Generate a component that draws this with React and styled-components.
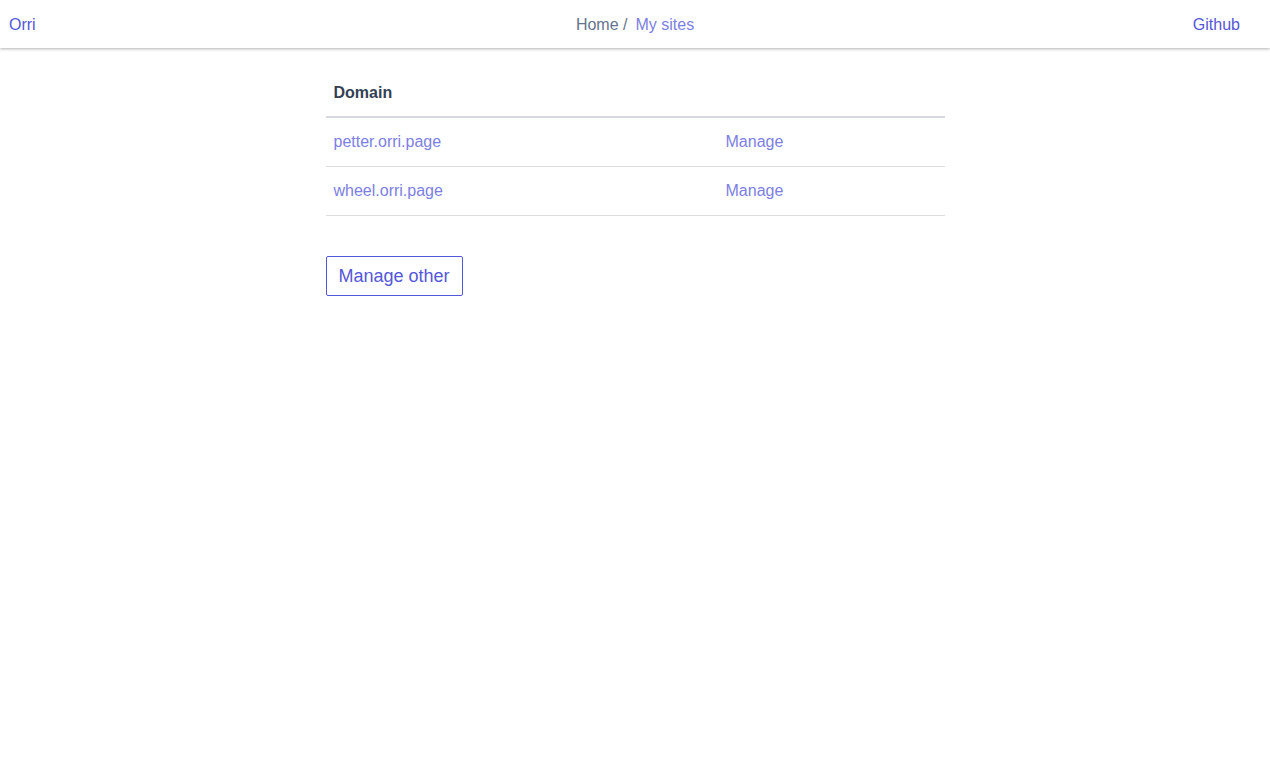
import React from "react"
import styled, { createGlobalStyle } from "styled-components"

const GlobalStyle = createGlobalStyle`
  html, body {
    margin: 0;
    background: #fff;
    font-family: "Liberation Sans", Arial, sans-serif;
  }
  a {
    text-decoration: none;
  }
`

const Header = styled.header`
  display: grid;
  grid-template-columns: 1fr auto 1fr;
  align-items: center;
  box-sizing: border-box;
  height: 48px;
  padding: 2px 9px 0;
  box-shadow: 0 1px 3px rgba(0, 0, 0, 0.3);
  font-size: 16px;
`

const Brand = styled.a`
  justify-self: start;
  color: #5457d8;
`

const Crumbs = styled.nav`
  display: flex;
  gap: 8px;
  color: #64748b;
`

const Crumb = styled.a`
  color: #7d80e2;
`

const NavLink = styled.a`
  justify-self: end;
  margin-right: 21px;
  color: #5457d8;
`

const Main = styled.main`
  width: 619px;
  margin: 0 auto;
  padding-top: 21px;
`

const Table = styled.table`
  width: 100%;
  border-collapse: collapse;
  font-size: 16px;
`

const Th = styled.th`
  text-align: left;
  padding: 0 8px;
  height: 47px;
  color: #334155;
  font-weight: bold;
  border-bottom: 2px solid #d6d9de;
`

const Td = styled.td`
  padding: 0 8px;
  height: 48px;
  width: ${(p) => p.$width || "auto"};
  border-bottom: 1px solid #dcdde3;
`

const CellLink = styled.a`
  color: #7d80e2;
`

const Button = styled.button`
  margin-top: 40px;
  height: 40px;
  padding: 0 12px;
  background: #fff;
  border: 1px solid #5457d8;
  border-radius: 2px;
  color: #5457d8;
  font-family: inherit;
  font-size: 18px;
  cursor: pointer;
`

const sites = ["petter.orri.page", "wheel.orri.page"]

const App = () => {
  return (
    <>
      <GlobalStyle />
      <Header>
        <Brand href="#">Orri</Brand>
        <Crumbs>
          <span>Home /</span>
          <Crumb href="#">My sites</Crumb>
        </Crumbs>
        <NavLink href="#">Github</NavLink>
      </Header>
      <Main>
        <Table>
          <thead>
            <tr>
              <Th>Domain</Th>
              <Th />
            </tr>
          </thead>
          <tbody>
            {sites.map((s) => (
              <tr key={s}>
                <Td $width="376px">
                  <CellLink href="#">{s}</CellLink>
                </Td>
                <Td>
                  <CellLink href="#">Manage</CellLink>
                </Td>
              </tr>
            ))}
          </tbody>
        </Table>
        <Button>Manage other</Button>
      </Main>
    </>
  )
}

export default App
